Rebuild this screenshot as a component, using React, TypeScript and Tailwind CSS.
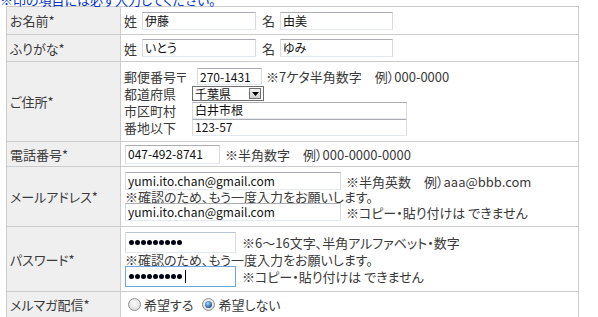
import React from "react";

const FONT = "font-['Noto_Sans_CJK_JP',sans-serif] [font-feature-settings:'palt']";

function Field({
  className,
  focus,
  children,
}: {
  className: string;
  focus?: boolean;
  children?: React.ReactNode;
}) {
  return (
    <div
      className={
        "flex items-center bg-white px-[2px] text-[12px] leading-[12px] text-[#111111] border " +
        (focus
          ? "border-[#6fa8dc] "
          : "border-[#abadb3] border-l-[#d9dbe0] border-r-[#d9dbe0] border-b-[#e3e9ef] ") +
        className
      }
    >
      {children}
    </div>
  );
}

function Dots({ caret }: { caret?: boolean }) {
  return (
    <div className="flex items-center gap-[1px] pl-[1px]">
      {Array.from({ length: 9 }).map((_, i) => (
        <span key={i} className="block w-[5px] h-[5px] rounded-full bg-[#000014]" />
      ))}
      {caret && <span className="ml-[2px] block w-[1px] h-[13px] bg-black" />}
    </div>
  );
}

function Radio({ checked }: { checked?: boolean }) {
  return (
    <span className="flex items-center justify-center w-[13px] h-[13px] rounded-full border border-[#8e8f8f] bg-[radial-gradient(circle_at_50%_40%,#ffffff,#d0d0d0)]">
      {checked && (
        <span className="block w-[7px] h-[7px] rounded-full bg-[radial-gradient(circle_at_40%_35%,#9fdcff,#1a4f8a_75%)]" />
      )}
    </span>
  );
}

function Row({
  label,
  h,
  children,
}: {
  label: string;
  h: string;
  children: React.ReactNode;
}) {
  return (
    <div className={"flex border-b border-[#cccccc] " + h}>
      <div className="flex w-[114px] shrink-0 items-center border-r border-[#cccccc] bg-[#efefef] pl-[3px] text-[13px] leading-[13px] text-[#3a3a3a]">
        {label}
      </div>
      <div className="flex flex-1 flex-col justify-center text-[13px] leading-[13px] text-[#3a3a3a]">
        {children}
      </div>
    </div>
  );
}

export default function App() {
  return (
    <div className={"w-[598px] h-[317px] overflow-hidden bg-white " + FONT}>
      <div className="flex h-[6px] items-end">
        <span className="block text-[13px] leading-[13px] text-[#0033cc]">
          ※印の項目には必ず入力してください。
        </span>
      </div>
      <div className="ml-[6px] w-[573px] border-l border-r border-t border-[#cccccc]">
        <Row label="お名前*" h="h-[28px]">
          <div className="flex items-center pl-[3px]">
            <span className="mr-[5px]">姓</span>
            <Field className="w-[114px] h-[18px]">伊藤</Field>
            <span className="ml-[6px] mr-[5px]">名</span>
            <Field className="w-[113px] h-[18px]">由美</Field>
          </div>
        </Row>
        <Row label="ふりがな*" h="h-[27px]">
          <div className="flex items-center pl-[3px]">
            <span className="mr-[5px]">姓</span>
            <Field className="w-[114px] h-[18px]">いとう</Field>
            <span className="ml-[6px] mr-[5px]">名</span>
            <Field className="w-[113px] h-[18px]">ゆみ</Field>
          </div>
        </Row>
        <Row label="ご住所*" h="h-[80px]">
          <div className="flex flex-col pl-[3px]">
            <div className="flex h-[18px] items-center">
              <span className="w-[73px]">郵便番号〒</span>
              <Field className="w-[65px] h-[17px]">270-1431</Field>
              <span className="ml-[4px]">※7ケタ半角数字　例）000-0000</span>
            </div>
            <div className="flex h-[16px] items-center">
              <span className="w-[68px]">都道府県</span>
              <div className="flex h-[15px] w-[72px] items-center justify-between border border-[#6f6f6f] bg-white pl-[2px] text-[12px] leading-[12px] text-[#111111]">
                <span>千葉県</span>
                <span className="mr-[2px] flex h-[11px] w-[12px] items-center justify-center border border-[#707070] bg-[linear-gradient(#f4f4f4,#cfcfcf)]">
                  <svg width="7" height="4" viewBox="0 0 7 4">
                    <path d="M0 0H7L3.5 4Z" fill="#000" />
                  </svg>
                </span>
              </div>
            </div>
            <div className="flex h-[17px] items-center">
              <span className="w-[68px]">市区町村</span>
              <Field className="w-[215px] h-[17px]">白井市根</Field>
            </div>
            <div className="flex h-[17px] items-center">
              <span className="w-[68px]">番地以下</span>
              <Field className="w-[215px] h-[17px]">123-57</Field>
            </div>
          </div>
        </Row>
        <Row label="電話番号*" h="h-[25px]">
          <div className="flex items-center pl-[4px]">
            <Field className="w-[95px] h-[19px]">047-492-8741</Field>
            <span className="ml-[5px]">※半角数字　例）000-0000-0000</span>
          </div>
        </Row>
        <Row label="メールアドレス*" h="h-[60px]">
          <div className="flex flex-col pl-[4px]">
            <div className="flex items-center">
              <Field className="w-[216px] h-[18px]">yumi.ito.chan@gmail.com</Field>
              <span className="ml-[5px]">※半角英数　例）aaa@bbb.com</span>
            </div>
            <div className="flex h-[13px] items-center">※確認のため、もう一度入力をお願いします。</div>
            <div className="flex items-center">
              <Field className="w-[216px] h-[18px]">yumi.ito.chan@gmail.com</Field>
              <span className="ml-[5px]">※コピー・貼り付けは できません</span>
            </div>
          </div>
        </Row>
        <Row label="パスワード*" h="h-[65px]">
          <div className="flex flex-col pl-[4px]">
            <div className="flex items-center">
              <Field className="w-[111px] h-[21px] border-[#b9c6d6]">
                <Dots />
              </Field>
              <span className="ml-[6px]">※6〜16文字、半角アルファベット・数字</span>
            </div>
            <div className="flex h-[13px] items-center">※確認のため、もう一度入力をお願いします。</div>
            <div className="flex items-center">
              <Field focus className="w-[111px] h-[21px]">
                <Dots caret />
              </Field>
              <span className="ml-[6px]">※コピー・貼り付けは できません</span>
            </div>
          </div>
        </Row>
        <Row label="メルマガ配信*" h="h-[26px]">
          <div className="flex items-center pl-[7px]">
            <Radio />
            <span className="ml-[3px]">希望する</span>
            <span className="ml-[9px]">
              <Radio checked />
            </span>
            <span className="ml-[3px]">希望しない</span>
          </div>
        </Row>
      </div>
    </div>
  );
}
